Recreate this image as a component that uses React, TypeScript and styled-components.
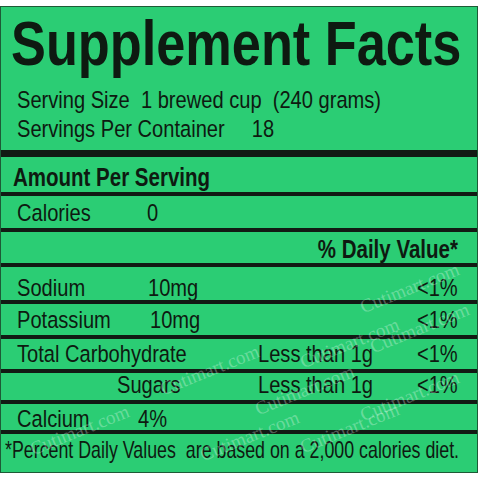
import { FC } from 'react'
import styled, { createGlobalStyle, css } from 'styled-components'

const GlobalStyle = createGlobalStyle`
  html, body { margin: 0; padding: 0; background: #fff; }
  body { width: 480px; height: 480px; overflow: hidden; }
`

const ink = '#0e1a11'
const rule = '#121a14'

// the label is set in a condensed face; squeeze Liberation Sans to match
const narrow = (scale = 0.82, origin = 'left') => css`
  display: inline-block;
  transform: scaleX(${scale});
  transform-origin: ${origin} center;
`

const Page = styled.div`
  padding-top: 6px;
`

const Panel = styled.div`
  position: relative;
  width: 478px;
  box-sizing: border-box;
  background: #2bcd74;
  border: 1px solid #1d5a36;
  color: ${ink};
  font-family: "Liberation Sans", Arial, sans-serif;
  overflow: hidden;
`

const Title = styled.h1`
  margin: 0;
  padding: 5px 0 0 10px;
  font-size: 63px;
  line-height: 63px;
  font-weight: 700;
  white-space: nowrap;
  span { ${narrow(0.83)} }
`

const Serving = styled.div`
  padding: 10px 0 7px 16px;
  font-size: 24.5px;
  line-height: 29px;
  white-space: pre;
  span { ${narrow()} }
`

const ServingValue = styled.b<{ $at: number }>`
  display: inline-block;
  font-weight: 400;
  margin-left: ${p => p.$at}px;
`

const ThickRule = styled.div`
  height: 7px;
  background: ${rule};
`

const Row = styled.div<{ $h: number; $pt: number }>`
  display: grid;
  grid-template-columns: 131px 110px 1fr auto;
  align-items: start;
  height: ${p => p.$h - p.$pt}px;
  padding: ${p => p.$pt}px 19px 0 16px;
  border-bottom: 4px solid ${rule};
  font-size: 24.5px;
  line-height: 20px;
  white-space: nowrap;
  &:last-of-type { border-bottom: none; }
`

const Heading = styled.div<{ $right?: boolean }>`
  grid-column: 1 / -1;
  font-size: 25px;
  font-weight: 700;
  margin-left: ${p => (p.$right ? 0 : -4)}px;
  justify-self: ${p => (p.$right ? 'end' : 'start')};
  ${p => narrow(0.82, p.$right ? 'right' : 'left')}
`

const Label = styled.div<{ $span?: boolean; $indent?: number }>`
  grid-column: ${p => (p.$span ? '1 / 3' : 'auto')};
  padding-left: ${p => p.$indent || 0}px;
  span { ${narrow()} }
`

const Amount = styled.div<{ $shift?: number }>`
  margin-left: ${p => p.$shift || 0}px;
  ${narrow()}
`

const Limit = styled.div`
  grid-column: 3;
  ${narrow()}
`

const Percent = styled.div`
  grid-column: 4;
  justify-self: end;
  ${narrow(0.82, 'right')}
`

const Footnote = styled.div`
  grid-column: 1 / -1;
  margin-left: -12px;
  font-size: 24px;
  white-space: pre;
  ${narrow(0.742)}
`

const Watermark = styled.span<{ $x: number; $y: number; $r: number }>`
  position: absolute;
  left: ${p => p.$x}px;
  top: ${p => p.$y}px;
  transform: rotate(${p => p.$r}deg);
  transform-origin: left center;
  font-family: "Liberation Serif", serif;
  font-size: 19px;
  color: rgba(255, 255, 255, 0.3);
  pointer-events: none;
  white-space: nowrap;
`

const marks = [
  { x: 360, y: 290, r: -22 },
  { x: 370, y: 330, r: -22 },
  { x: 300, y: 345, r: -22 },
  { x: 255, y: 392, r: -22 },
  { x: 360, y: 398, r: -22 },
  { x: 160, y: 372, r: -22 },
  { x: 30, y: 432, r: -22 },
  { x: 200, y: 438, r: -22 },
  { x: 300, y: 430, r: -22 },
]

const App: FC = () => {
  return (
    <Page>
      <GlobalStyle />
      <Panel>
        <Title><span>Supplement Facts</span></Title>
        <Serving>
          <span>Serving Size  1 brewed cup  (240 grams)</span>
          {'\n'}
          <span>Servings Per Container<ServingValue $at={33}>18</ServingValue></span>
        </Serving>
        <ThickRule />

        <Row $h={35} $pt={10}>
          <Heading>Amount Per Serving</Heading>
        </Row>
        <Row $h={32} $pt={7}>
          <Label><span>Calories</span></Label>
          <Amount $shift={-1}>0</Amount>
        </Row>
        <Row $h={31} $pt={7}>
          <Heading $right>% Daily Value*</Heading>
        </Row>
        <Row $h={33} $pt={11}>
          <Label><span>Sodium</span></Label>
          <Amount>10mg</Amount>
          <Percent>&lt;1%</Percent>
        </Row>
        <Row $h={31} $pt={6}>
          <Label><span>Potassium</span></Label>
          <Amount $shift={2}>10mg</Amount>
          <Percent>&lt;1%</Percent>
        </Row>
        <Row $h={30} $pt={5}>
          <Label $span><span>Total Carbohydrate</span></Label>
          <Limit>Less than 1g</Limit>
          <Percent>&lt;1%</Percent>
        </Row>
        <Row $h={27} $pt={2}>
          <Label $span $indent={100}><span>Sugars</span></Label>
          <Limit>Less than 1g</Limit>
          <Percent>&lt;1%</Percent>
        </Row>
        <Row $h={26} $pt={5}>
          <Label><span>Calcium</span></Label>
          <Amount $shift={-10}>4%</Amount>
        </Row>
        <Row $h={38} $pt={6}>
          <Footnote>*Percent Daily Values  are based on a 2,000 calories diet.</Footnote>
        </Row>

        {marks.map((m, i) => (
          <Watermark key={i} $x={m.x} $y={m.y} $r={m.r}>
            Cutimart.com
          </Watermark>
        ))}
      </Panel>
    </Page>
  )
}

export default App
